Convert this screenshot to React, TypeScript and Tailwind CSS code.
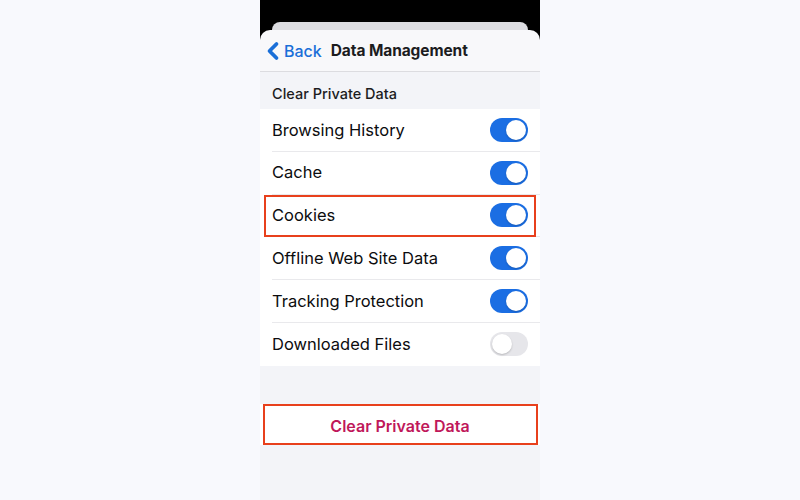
import { ChevronLeft } from 'lucide-react';

interface Row {
  label: string;
  on: boolean;
  highlight?: boolean;
}

const rows: Row[] = [
  { label: 'Browsing History', on: true },
  { label: 'Cache', on: true },
  { label: 'Cookies', on: true, highlight: true },
  { label: 'Offline Web Site Data', on: true },
  { label: 'Tracking Protection', on: true },
  { label: 'Downloaded Files', on: false },
];

function Toggle({ on }: { on: boolean }) {
  return (
    <div
      className={`w-[38px] h-[24px] rounded-full p-[2px] flex ${
        on ? 'bg-[#1b6ee3] justify-end' : 'bg-[#e6e6ea] justify-start'
      }`}
    >
      <div className="w-[20px] h-[20px] rounded-full bg-white shadow-[0_1px_2px_rgba(0,0,0,0.2)]" />
    </div>
  );
}

export default function App() {
  return (
    <div
      className="w-full h-[500px] bg-[#f8f9fd] flex justify-center overflow-hidden"
      style={{ fontFamily: 'Inter, "Noto Sans", sans-serif' }}
    >
      <div className="w-[280px] flex flex-col bg-[#f3f4f8]">
        {/* Top status area + header */}
        <div className="bg-black pt-[22px]">
          <div className="mx-[12px] h-[8px] rounded-t-[8px] bg-[#dcdce0]" />
          <div className="h-[42px] bg-[#f8f8fa] rounded-t-[10px] flex items-center border-b border-[#dcdce0]">
            <div className="flex items-center text-[#1a6fd8]">
              <ChevronLeft size={28} strokeWidth={3.2} className="-ml-[1px] -mr-[3px]" />
              <span className="text-[16px] font-medium">Back</span>
            </div>
            <span className="ml-[9px] text-[15.5px] font-bold text-[#1c1c1e] tracking-[-0.1px]">
              Data Management
            </span>
          </div>
        </div>

        {/* Section header */}
        <div className="h-[37px] flex items-end pb-[4px] px-[12px] text-[14.5px] font-medium text-[#1c1c1e]">
          Clear Private Data
        </div>

        {/* Rows */}
        <div className="bg-white">
          {rows.map((row, i) => (
            <div key={row.label} className="relative h-[42.8px] pl-[12px]">
              <div
                className={`h-full flex items-center justify-between pr-[12px] ${
                  i < rows.length - 1 ? 'border-b border-[#e9e9ec]' : ''
                }`}
              >
                <span className="text-[16.5px] text-[#0c0c0e]">{row.label}</span>
                <Toggle on={row.on} />
              </div>
              {row.highlight && (
                <div className="absolute left-[4px] right-[4px] top-0 bottom-0 border-2 border-[#e8401c]" />
              )}
            </div>
          ))}
        </div>

        <div className="h-[38px]" />

        {/* Clear button */}
        <div className="relative h-[41px] bg-white flex items-center justify-center">
          <span className="text-[16px] font-semibold text-[#c0185a] mt-[3px]">Clear Private Data</span>
          <div className="absolute left-[3px] right-[2px] top-0 bottom-0 border-2 border-[#e8401c]" />
        </div>
      </div>
    </div>
  );
}
